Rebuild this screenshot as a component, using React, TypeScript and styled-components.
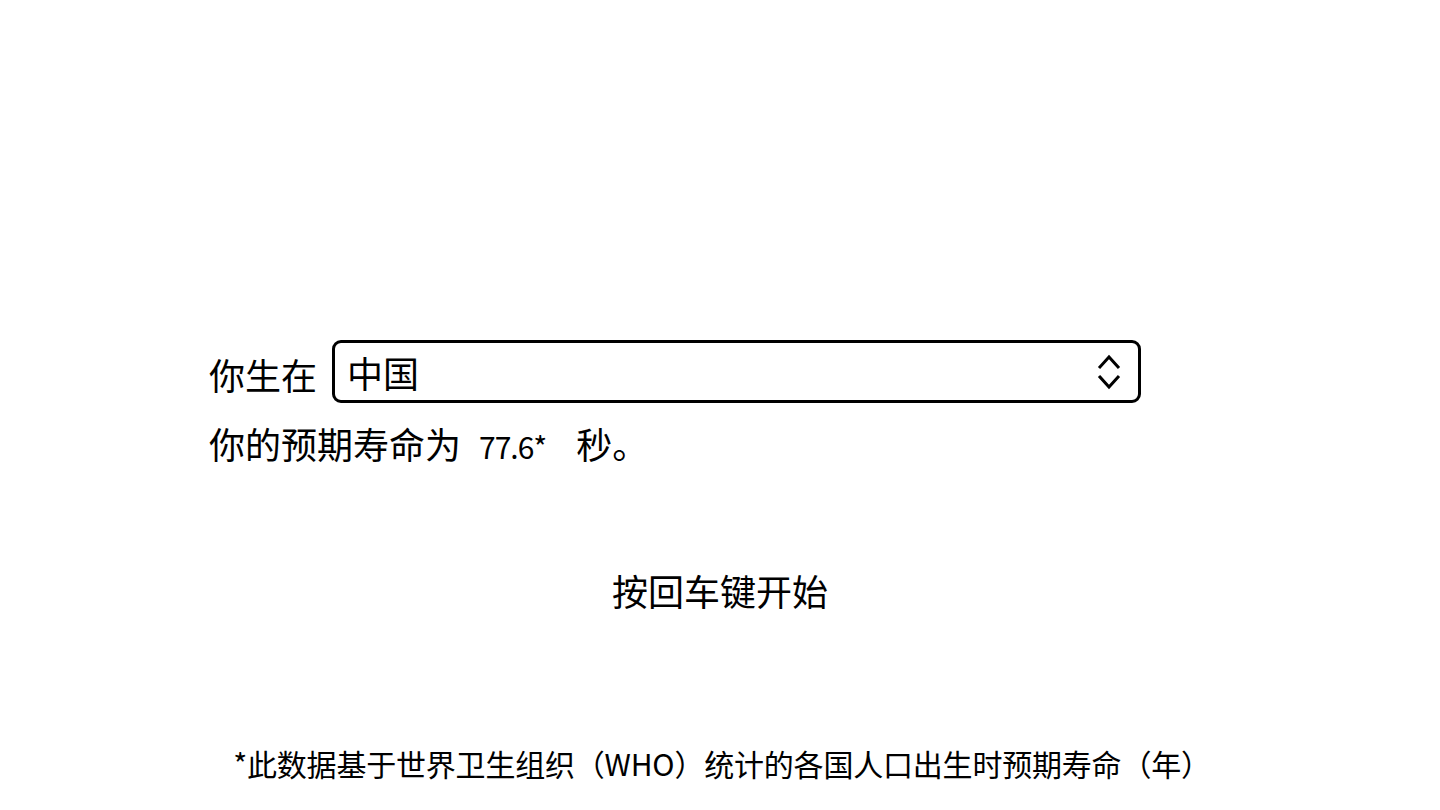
import { createGlobalStyle } from "styled-components";
import styled from "styled-components";

const GlobalStyle = createGlobalStyle`
  html, body {
    margin: 0;
    padding: 0;
    background: #ffffff;
  }

  body {
    color: #000000;
    font-family: "Noto Sans CJK SC", "Noto Sans", sans-serif;
  }
`;

export default function App() {
  return (
    <>
      <GlobalStyle />
      <Page>
        <Main>
          <BirthRow>
            <Label>你生在</Label>
            <CountrySelect>
              <span>中国</span>
              <UpDownIcon viewBox="0 0 24 36" aria-hidden="true">
                <polyline points="3,13 12,3 21,13" />
                <polyline points="3,23 12,33 21,23" />
              </UpDownIcon>
            </CountrySelect>
          </BirthRow>
          <LifeLine>
            你的预期寿命为<Number>77.6*</Number>秒。
          </LifeLine>
        </Main>

        <StartPrompt>按回车键开始</StartPrompt>

        <Footnote>*此数据基于世界卫生组织（WHO）统计的各国人口出生时预期寿命（年）</Footnote>
      </Page>
    </>
  );
}

const Page = styled.div`
  display: flex;
  flex-direction: column;
  height: 810px;
  overflow: hidden;
`;

const Main = styled.div`
  display: flex;
  flex-direction: column;
  padding: 340px 0 0 209px;
`;

const BirthRow = styled.div`
  display: flex;
  align-items: center;
  gap: 15px;
`;

const Label = styled.span`
  font-size: 36px;
  line-height: 1;
  padding-top: 4px;
`;

const CountrySelect = styled.div`
  display: flex;
  align-items: center;
  justify-content: space-between;
  box-sizing: border-box;
  width: 809px;
  height: 63px;
  border: 3px solid #000000;
  border-radius: 9px;
  padding: 0 17px 0 12px;
  font-size: 36px;
  line-height: 1;
`;

const UpDownIcon = styled.svg`
  width: 24px;
  height: 36px;
  fill: none;
  stroke: #000000;
  stroke-width: 3;
  stroke-linecap: square;
  stroke-linejoin: miter;
`;

const LifeLine = styled.div`
  margin-top: 22px;
  font-size: 36px;
  line-height: 1;
`;

const Number = styled.span`
  display: inline-block;
  margin: 0 30px 0 18px;
  font-size: 30px;
  letter-spacing: -1px;
`;

const StartPrompt = styled.div`
  margin-top: 111px;
  text-align: center;
  font-size: 36px;
  line-height: 1;
`;

const Footnote = styled.div`
  margin-top: 140px;
  padding-left: 4px;
  text-align: center;
  font-size: 30px;
  letter-spacing: -0.2px;
  line-height: 1;
  white-space: nowrap;
`;
